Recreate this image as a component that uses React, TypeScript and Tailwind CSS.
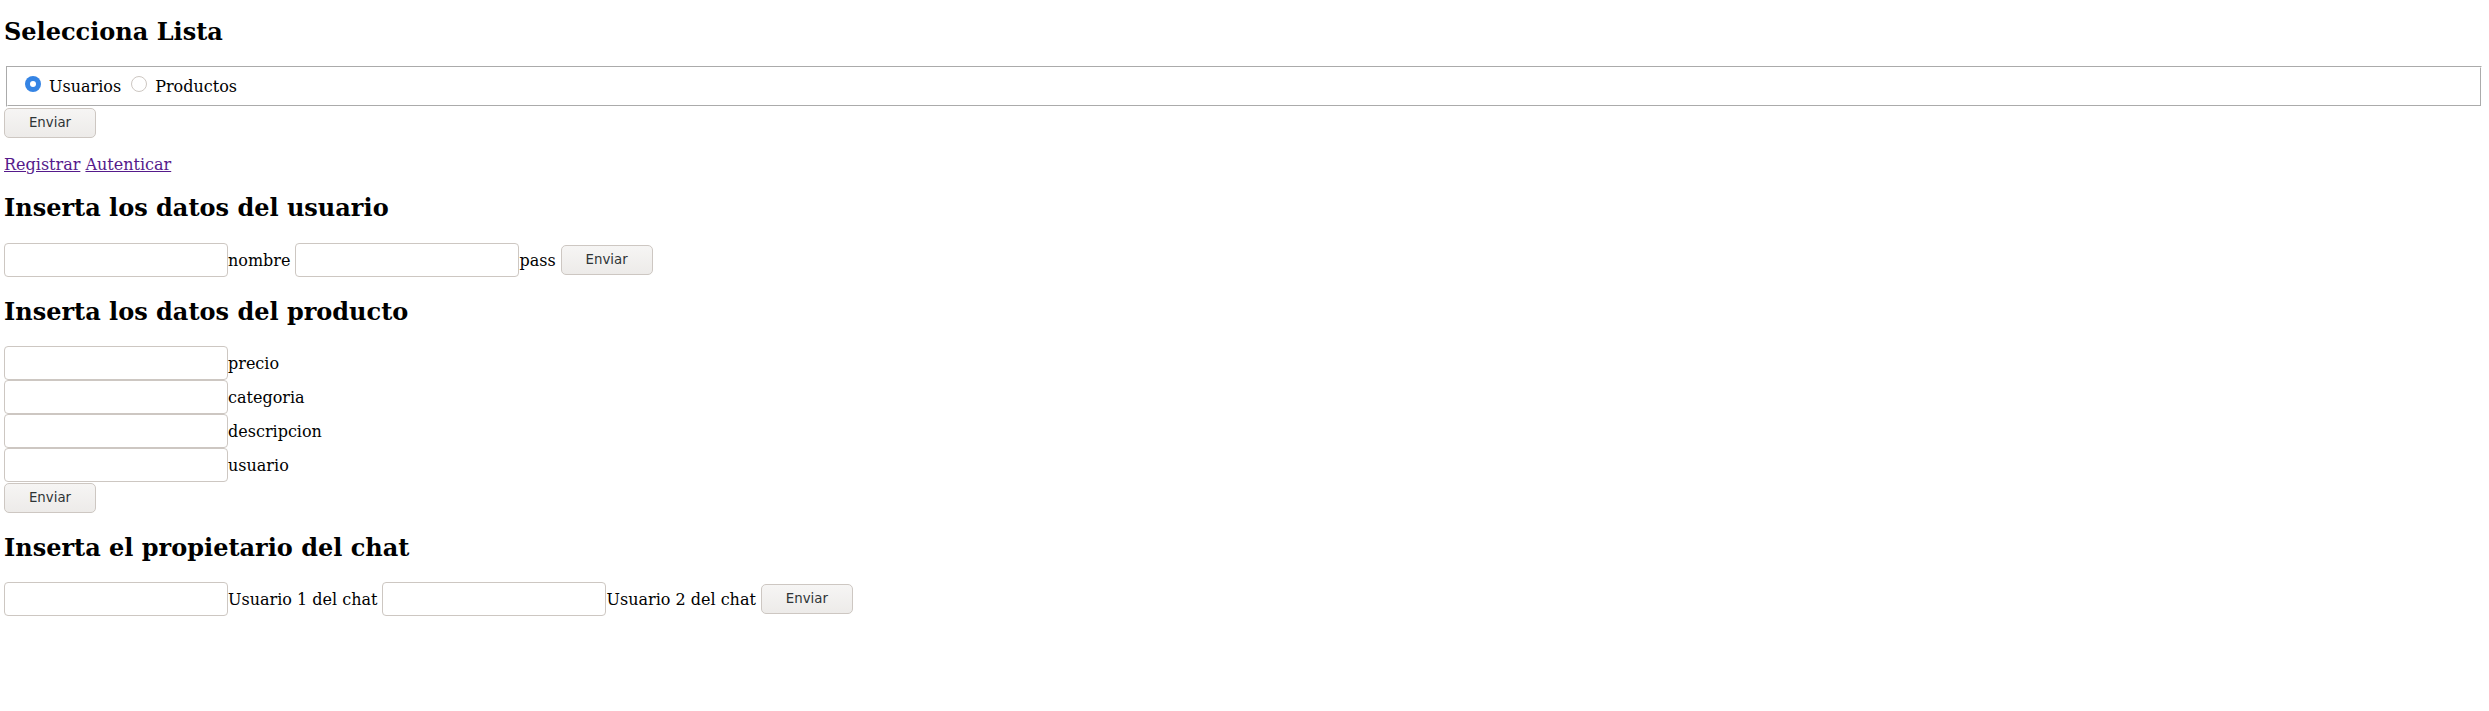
import React from "react";

function Btn({ extra = "" }: { extra?: string }) {
  return (
    <button
      type="button"
      className={`h-[30px] w-[92px] shrink-0 rounded-[5px] border border-[#cdc7c2] bg-linear-to-b from-[#f6f5f4] to-[#edebe9] font-['DejaVu_Sans',sans-serif] text-[13.33px] leading-[16px] text-[#2e3436] ${extra}`}
    >
      Enviar
    </button>
  );
}

function Field({ extra = "" }: { extra?: string }) {
  return (
    <input
      type="text"
      className={`h-[34px] w-[224px] shrink-0 rounded-[4px] border border-[#cdc7c2] bg-white px-[6px] font-['DejaVu_Sans',sans-serif] text-[13.33px] outline-none ${extra}`}
    />
  );
}

function Label({ text }: { text: string }) {
  return <span className="whitespace-pre leading-[19px]">{text}</span>;
}

export default function App() {
  return (
    <div className="min-h-[711px] bg-white pl-[4px] pr-[5px] font-['DejaVu_Serif',serif] text-[16px] text-black">
      <h2 className="mt-[18px] text-[24px] font-bold leading-[28px]">Selecciona Lista</h2>

      <div className="mx-[2px] mt-[20px] h-[41px] border-2 border-white pl-[12px] pt-[8px] leading-[19px] [border-style:groove]">
        <span className="relative ml-[5px] mr-[8px] inline-block size-[16px] rounded-full bg-[#3584e4] align-baseline">
          <span className="absolute left-[5px] top-[5px] size-[6px] rounded-full bg-white" />
        </span>
        <span>Usuarios</span>
        <span className="ml-[10px] mr-[8px] inline-block size-[16px] rounded-full border border-[#cdc7c2] bg-white align-baseline" />
        <span>Productos</span>
      </div>

      <div className="mt-[1px] flex">
        <Btn />
      </div>

      <div className="mt-[17px] leading-[19px]">
        <a href="#" className="text-[#551a8b] underline">Registrar</a>
        <span> </span>
        <a href="#" className="text-[#551a8b] underline">Autenticar</a>
      </div>

      <h2 className="mt-[20px] text-[24px] font-bold leading-[28px]">Inserta los datos del usuario</h2>

      <div className="mt-[21px] flex items-center">
        <Field />
        <Label text="nombre" />
        <Field extra="ml-[5px]" />
        <Label text="pass" />
        <Btn extra="ml-[5px]" />
      </div>

      <h2 className="mt-[21px] text-[24px] font-bold leading-[28px]">Inserta los datos del producto</h2>

      <div className="mt-[20px] flex flex-col">
        <div className="flex items-center">
          <Field />
          <Label text="precio" />
        </div>
        <div className="flex items-center">
          <Field />
          <Label text="categoria" />
        </div>
        <div className="flex items-center">
          <Field />
          <Label text="descripcion" />
        </div>
        <div className="flex items-center">
          <Field />
          <Label text="usuario" />
        </div>
      </div>

      <div className="mt-[1px] flex">
        <Btn />
      </div>

      <h2 className="mt-[21px] text-[24px] font-bold leading-[28px]">Inserta el propietario del chat</h2>

      <div className="mt-[20px] flex items-center">
        <Field />
        <Label text="Usuario 1 del chat" />
        <Field extra="ml-[5px]" />
        <Label text="Usuario 2 del chat" />
        <Btn extra="ml-[5px]" />
      </div>
    </div>
  );
}
